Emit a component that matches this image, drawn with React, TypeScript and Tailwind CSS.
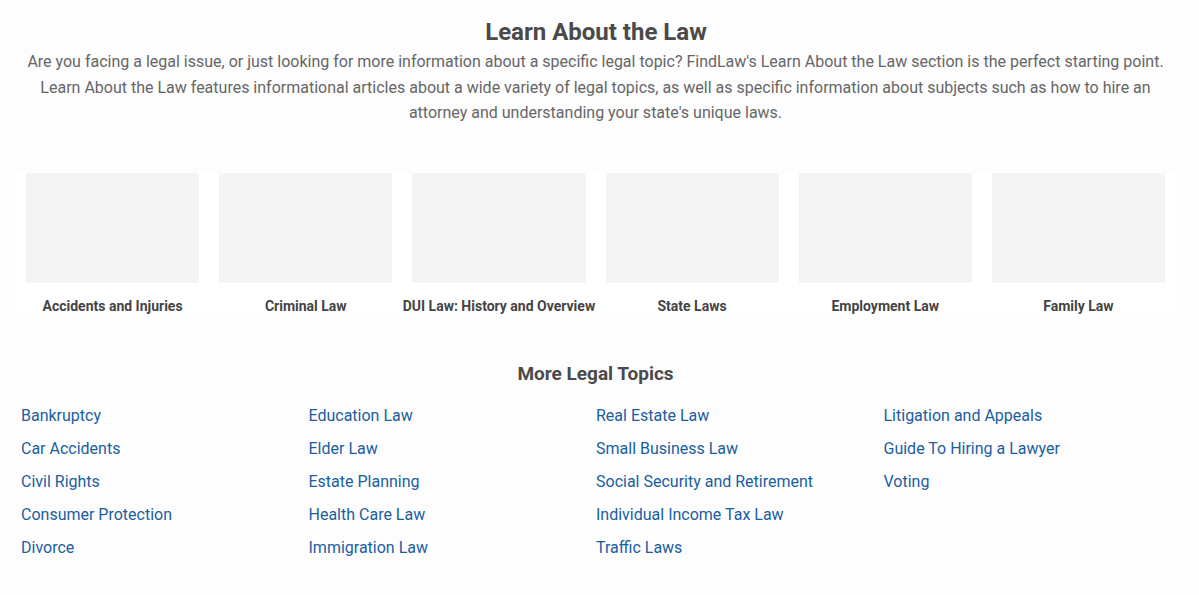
import React from "react";

const cards = [
  "Accidents and Injuries",
  "Criminal Law",
  "DUI Law: History and Overview",
  "State Laws",
  "Employment Law",
  "Family Law",
];

const columns = [
  ["Bankruptcy", "Car Accidents", "Civil Rights", "Consumer Protection", "Divorce"],
  ["Education Law", "Elder Law", "Estate Planning", "Health Care Law", "Immigration Law"],
  ["Real Estate Law", "Small Business Law", "Social Security and Retirement", "Individual Income Tax Law", "Traffic Laws"],
  ["Litigation and Appeals", "Guide To Hiring a Lawyer", "Voting"],
];

export default function App() {
  return (
    <div
      className="w-[1199px] h-[595px] bg-[#fdfdfe] overflow-hidden"
      style={{ fontFamily: "Roboto, 'Liberation Sans', sans-serif" }}
    >
      <h1 className="pt-[18px] pr-[7px] text-center text-[24px] leading-[28px] font-bold text-[#4a4a4a]">
        Learn About the Law
      </h1>
      <p className="mt-[3px] pl-[12px] pr-[20px] text-center text-[16px] leading-[25.6px] text-[#666666]">
        Are you facing a legal issue, or just looking for more information about a specific legal topic? FindLaw's Learn About the Law section is the perfect starting point. Learn About the Law features informational articles about a wide variety of legal topics, as well as specific information about subjects such as how to hire an attorney and understanding your state's unique laws.
      </p>
      <div className="mt-[47px] ml-[16px] w-[1159px] grid grid-cols-6 bg-white pb-[2px]">
        {cards.map((c) => (
          <div key={c} className="px-[10px] flex flex-col items-center">
            <div className="w-full h-[110px] bg-[#f4f4f4]" />
            <div className="mt-[13px] text-[14px] leading-[20px] font-bold text-[#444444] text-center whitespace-nowrap">
              {c}
            </div>
          </div>
        ))}
      </div>
      <h2 className="mt-[44px] pr-[8px] text-center text-[19px] leading-[24px] font-bold text-[#4a4a4a]">
        More Legal Topics
      </h2>
      <div className="mt-[18px] ml-[21px] w-[1150px] grid grid-cols-4">
        {columns.map((col, i) => (
          <div key={i} className="flex flex-col gap-[9px]">
            {col.map((l) => (
              <a key={l} className="text-[16px] leading-[24px] text-[#1b5e9e]">
                {l}
              </a>
            ))}
          </div>
        ))}
      </div>
    </div>
  );
}
